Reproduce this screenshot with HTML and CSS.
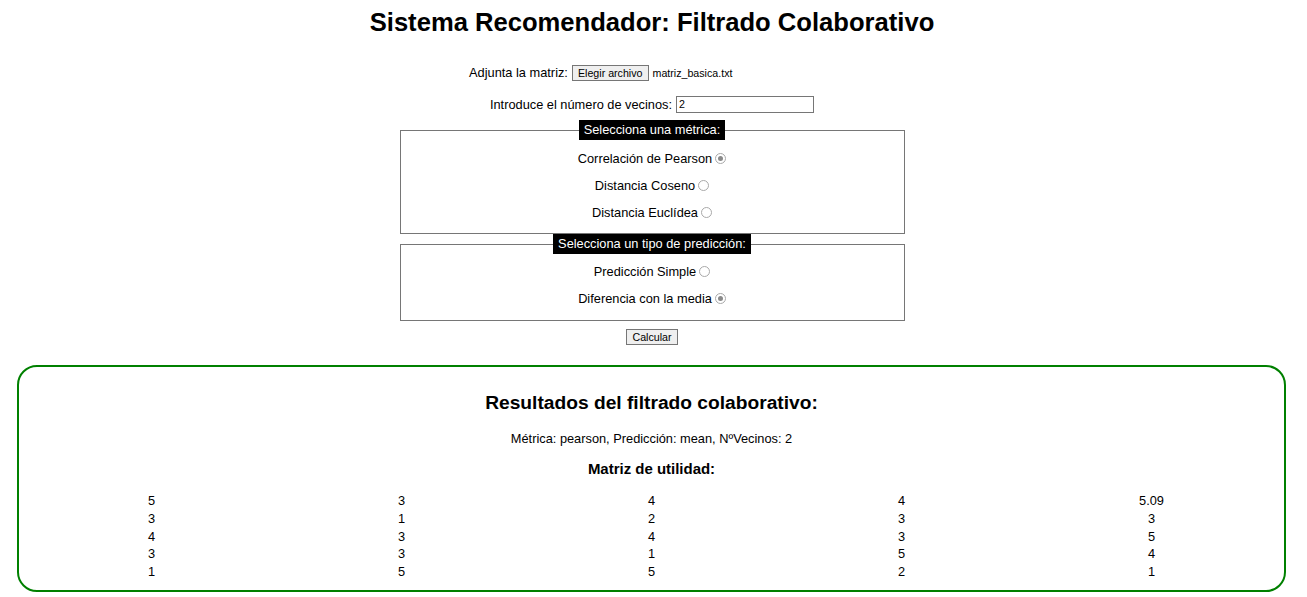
FILE: index.html
```html
<!DOCTYPE html>
<html lang="es">
<head>
<meta charset="utf-8">
<title>Sistema Recomendador</title>
<link rel="stylesheet" href="styles.css">
</head>
<body>
<h1 class="title">Sistema Recomendador: Filtrado Colaborativo</h1>
<form class="form">
  <div class="row row-file">
    <span>Adjunta la matriz:</span>
    <span class="file">
      <button type="button" class="btn">Elegir archivo</button>
      <span class="filename">matriz_basica.txt</span>
    </span>
  </div>
  <div class="row row-num">
    <label for="vecinos">Introduce el número de vecinos:</label>
    <input id="vecinos" class="num" type="text" value="2">
  </div>
  <fieldset class="group group-1">
    <legend class="legend">Selecciona una métrica:</legend>
    <label class="opt">Correlación de Pearson <input class="radio" type="radio" name="m" checked></label>
    <label class="opt">Distancia Coseno <input class="radio" type="radio" name="m"></label>
    <label class="opt">Distancia Euclídea <input class="radio" type="radio" name="m"></label>
  </fieldset>
  <fieldset class="group group-2">
    <legend class="legend">Selecciona un tipo de predicción:</legend>
    <label class="opt">Predicción Simple <input class="radio" type="radio" name="p"></label>
    <label class="opt">Diferencia con la media <input class="radio" type="radio" name="p" checked></label>
  </fieldset>
  <div class="row row-submit">
    <button type="button" class="btn">Calcular</button>
  </div>
</form>
<section class="results">
  <h2 class="results-title">Resultados del filtrado colaborativo:</h2>
  <p class="meta">Métrica: pearson, Predicción: mean, NºVecinos: 2</p>
  <h3 class="matrix-title">Matriz de utilidad:</h3>
  <div class="matrix">
    <span>5</span><span>3</span><span>4</span><span>4</span><span>5.09</span>
    <span>3</span><span>1</span><span>2</span><span>3</span><span>3</span>
    <span>4</span><span>3</span><span>4</span><span>3</span><span>5</span>
    <span>3</span><span>3</span><span>1</span><span>5</span><span>4</span>
    <span>1</span><span>5</span><span>5</span><span>2</span><span>1</span>
  </div>
</section>
</body>
</html>
```
FILE: styles.css
```css
html, body {
  background: #fff;
}
body {
  margin: 0 11px 0 8px;
  font-family: "Liberation Sans", Arial, sans-serif;
  font-size: 12.8px;
  color: #000;
}
.title {
  margin: 0;
  padding: 7px 0;
  line-height: 30px;
  font-size: 25.6px;
  font-weight: bold;
  text-align: center;
}
.form {
  display: flex;
  flex-direction: column;
  align-items: center;
}
.row {
  display: flex;
  justify-content: center;
  align-items: center;
  gap: 4px;
  width: 100%;
}
.row-file {
  margin-top: 20px;
  height: 17px;
}
.row-num {
  margin-top: 14px;
  height: 18px;
}
.row-submit {
  margin-top: 7px;
  height: 17px;
}
.file {
  display: flex;
  align-items: center;
  gap: 4px;
  width: 263px;
}
.btn {
  font-family: "Liberation Sans", Arial, sans-serif;
  font-size: 10.67px;
  line-height: 12px;
  height: 16px;
  padding: 0 5px;
  margin: 0;
  background: #efefef;
  border: 1px solid #767676;
  border-radius: 0;
  color: #000;
}
.filename {
  font-size: 10.67px;
}
.num {
  box-sizing: border-box;
  width: 138px;
  height: 17px;
  margin: 0;
  padding: 1px 2px;
  font-family: "Liberation Sans", Arial, sans-serif;
  font-size: 10.67px;
  border: 1px solid #767676;
  border-radius: 0;
}
.group {
  box-sizing: border-box;
  width: 505px;
  margin: 0;
  border: 1px solid #767676;
  display: flex;
  flex-direction: column;
  align-items: center;
  gap: 12px;
  padding: 10px 10px 13px;
  min-inline-size: 0;
}
.group-1 {
  margin-top: 7px;
  padding-top: 11px;
}
.group-2 {
  margin-top: 0;
  padding-bottom: 14px;
}
.legend {
  background: #000;
  color: #fff;
  padding: 2px 5px;
  line-height: 16px;
  margin: 0 auto;
}
.opt {
  display: flex;
  align-items: center;
  height: 15px;
  line-height: 15px;
  gap: 3px;
}
.radio {
  appearance: none;
  -webkit-appearance: none;
  box-sizing: border-box;
  width: 11px;
  height: 11px;
  margin: 0;
  border: 1px solid #a9a9a9;
  border-radius: 50%;
  background: #fff;
  position: relative;
}
.radio:checked::after {
  content: "";
  position: absolute;
  left: 2px;
  top: 2px;
  width: 5px;
  height: 5px;
  border-radius: 50%;
  background: #8a8a8a;
}
.results {
  margin: 20px 10px 0 9px;
  border: 2px solid #008000;
  border-radius: 20px;
  padding: 25px 7px 9px;
  text-align: center;
}
.results-title {
  margin: 0;
  font-size: 19.2px;
  line-height: 22px;
}
.meta {
  margin: 17px 0 0;
  line-height: 15px;
}
.matrix-title {
  margin: 14px 0 0;
  font-size: 14.98px;
  line-height: 17px;
}
.matrix {
  margin: 15px auto 0;
  width: 1250px;
  display: grid;
  grid-template-columns: repeat(5, 250px);
  grid-auto-rows: 17.75px;
  line-height: 17.75px;
}
```
